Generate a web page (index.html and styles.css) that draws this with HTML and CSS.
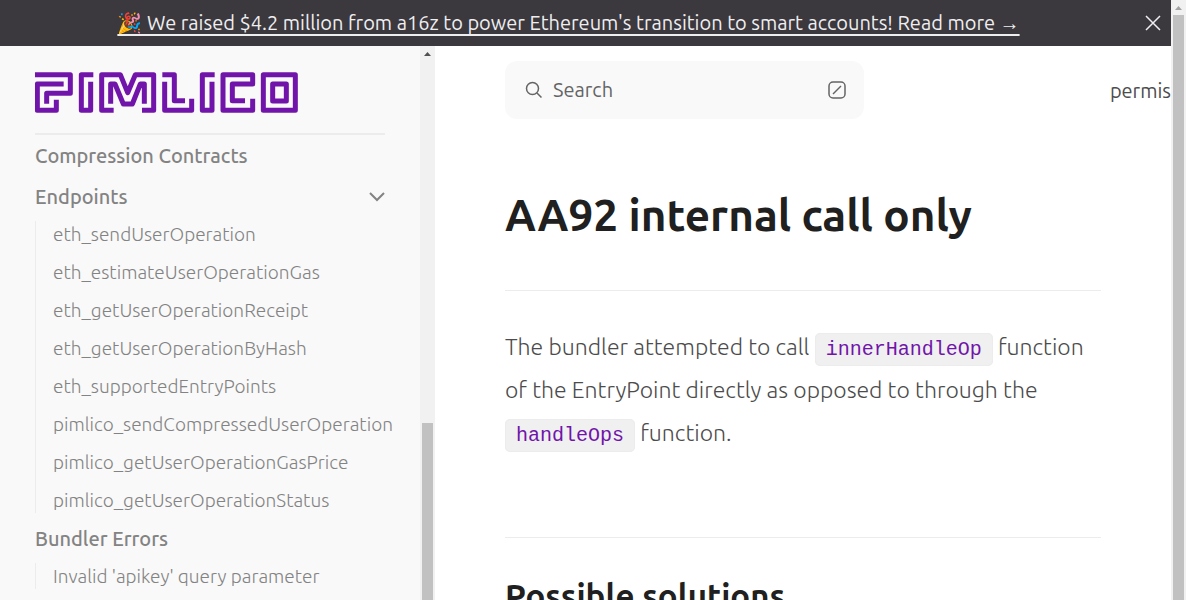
FILE: index.html
```html
<!DOCTYPE html>
<html lang="en">
<head>
<meta charset="utf-8">
<title>AA92 internal call only</title>
<link rel="stylesheet" href="styles.css">
</head>
<body>
<div class="page">
  <div class="banner">
    <a class="banner-link" href="#">🎉 We raised $4.2 million from a16z to power Ethereum's transition to smart accounts! Read more →</a>
    <button class="banner-close" type="button" aria-label="Close">
      <svg width="16" height="16" viewBox="0 0 16 16"><path d="M1 1L15 15M15 1L1 15"/></svg>
    </button>
  </div>
  <div class="columns">
    <aside class="sidebar">
      <div class="sidebar-content">
        <a class="logo" href="#" aria-label="Pimlico">
          <svg width="263" height="41" viewBox="0 0 789 123">
            <path d="M0 8H106V64H35V95M86 36H7V115H64V83"/>
            <path d="M175 8H139V115H167V29"/>
            <path d="M236 115H200V8H256L278 62L301 8H356V115H321M227 95V36H240L265 96H292L316 36H328V95"/>
            <path d="M382 8H418V86H450M389 29V115H470V80"/>
            <path d="M539 8H502V115H531V29"/>
            <path d="M630 86H592V36H653V8H564V115H653V80"/>
            <path d="M685 8H781V115H685ZM713 36H754V87H713Z"/>
          </svg>
        </a>
        <nav class="nav">
          <a class="nav-title" href="#">Compression Contracts</a>
          <div class="nav-group">
            <button class="nav-title nav-toggle" type="button">Endpoints
              <svg width="16" height="10" viewBox="0 0 16 10"><path d="M1 1L8 8L15 1"/></svg>
            </button>
            <ul class="nav-list">
              <li><a href="#">eth_sendUserOperation</a></li>
              <li><a href="#">eth_estimateUserOperationGas</a></li>
              <li><a href="#">eth_getUserOperationReceipt</a></li>
              <li><a href="#">eth_getUserOperationByHash</a></li>
              <li><a href="#">eth_supportedEntryPoints</a></li>
              <li><a href="#">pimlico_sendCompressedUserOperation</a></li>
              <li><a href="#">pimlico_getUserOperationGasPrice</a></li>
              <li><a href="#">pimlico_getUserOperationStatus</a></li>
            </ul>
          </div>
          <div class="nav-group">
            <a class="nav-title" href="#">Bundler Errors</a>
            <ul class="nav-list">
              <li><a href="#">Invalid 'apikey' query parameter</a></li>
            </ul>
          </div>
        </nav>
      </div>
      <div class="scrollbar sidebar-scrollbar">
        <svg width="15" height="15" viewBox="0 0 15 15"><path d="M4 10L7.500 6L11 10Z"/></svg>
        <div class="thumb"></div>
      </div>
    </aside>
    <div class="main">
      <header class="topbar">
        <button class="search" type="button">
          <svg width="18" height="18" viewBox="0 0 18 18"><circle cx="7.500" cy="7.500" r="6"/><path d="M12 12L16.500 16.500"/></svg>
          <span class="search-label">Search</span>
          <svg class="search-key" width="18" height="18" viewBox="0 0 18 18"><rect x="1" y="1" width="16" height="16" rx="4"/><path d="M5 13L13 5"/></svg>
        </button>
        <a class="top-link" href="#">permis</a>
      </header>
      <article class="article">
        <h1>AA92 internal call only</h1>
        <p>The bundler attempted to call <code>innerHandleOp</code> function of the EntryPoint directly as opposed to through the <code>handleOps</code> function.</p>
        <h2>Possible solutions</h2>
      </article>
    </div>
  </div>
</div>
<div class="scrollbar page-scrollbar">
  <svg width="15" height="15" viewBox="0 0 15 15"><path d="M4 10L7.500 6L11 10Z"/></svg>
  <div class="thumb"></div>
</div>
</body>
</html>
```
FILE: styles.css
```css
* {
  box-sizing: border-box;
}

body {
  margin: 0;
  display: flex;
  height: 100vh;
  overflow: hidden;
  background: #fff;
  color: #4c4c4c;
  font-family: Ubuntu, "Noto Sans", "Open Sans", sans-serif;
  font-size: 20px;
}

a {
  color: inherit;
  text-decoration: none;
}

button {
  border: 0;
  padding: 0;
  background: none;
  color: inherit;
  font: inherit;
  text-align: left;
}

svg {
  display: block;
  flex: none;
  fill: none;
  stroke: currentColor;
}

.page {
  flex: 1;
  min-width: 0;
  display: flex;
  flex-direction: column;
}

.banner {
  display: flex;
  align-items: center;
  gap: 8px;
  flex: none;
  padding: 8px 10px 8px 0;
  background: #3b383e;
  color: #eeeef0;
  line-height: 30px;
}

.banner-link {
  margin: 0 auto;
  font-size: 20px;
  white-space: nowrap;
  text-decoration: underline;
  text-decoration-thickness: 2px;
  text-underline-offset: 4px;
}

.banner-close svg {
  stroke-width: 1.5;
}

.columns {
  flex: 1;
  min-height: 0;
  display: flex;
}

.sidebar {
  flex: none;
  display: flex;
  width: 435px;
  background: #f9f9f9;
}

.sidebar-content {
  flex: 1;
  min-width: 0;
  overflow: hidden;
  padding: 26px 35px 0;
  color: #838383;
}

.logo {
  display: block;
  padding-bottom: 20px;
  border-bottom: 2px solid #ececec;
  color: #7115aa;
}

.logo svg {
  stroke-width: 15;
  stroke-linejoin: round;
}

.nav {
  display: flex;
  flex-direction: column;
  padding-top: 6px;
}

.nav-title {
  display: flex;
  align-items: center;
  justify-content: space-between;
  width: 100%;
  line-height: 30px;
  font-size: 20px;
  font-weight: 500;
}

.nav-group {
  padding-top: 11px;
}

.nav-toggle svg {
  stroke-width: 2;
}

.nav-list {
  list-style: none;
  margin: 9px 0 0;
  padding: 0 0 0 17px;
  border-left: 1px solid #ececec;
  font-size: 19px;
  font-weight: 300;
  white-space: nowrap;
}

.nav-list li {
  line-height: 26px;
  padding-bottom: 12px;
}

.nav-list li:last-child {
  padding-bottom: 0;
}

.scrollbar {
  flex: none;
  display: flex;
  flex-direction: column;
  width: 15px;
  background: #f1f1f1;
}

.scrollbar svg {
  fill: #505050;
  stroke: none;
}

.page-scrollbar svg {
  fill: #a3a3a3;
}

.thumb {
  flex: 1;
  margin: 0 2px;
  background: #c1c1c1;
}

.sidebar-scrollbar .thumb {
  flex: none;
  height: 32%;
  margin-top: auto;
}

.main {
  flex: 1;
  min-width: 0;
  overflow: hidden;
}

.topbar {
  display: flex;
  align-items: center;
  justify-content: space-between;
  padding: 15px 0 0 70px;
}

.search {
  flex: none;
  display: flex;
  align-items: center;
  width: 359px;
  padding: 14px 18px 14px 20px;
  border-radius: 12px;
  background: #f9f9f9;
  color: #646464;
  line-height: 30px;
}

.search svg {
  stroke-width: 1.5;
}

.search-label {
  flex: 1;
  padding-left: 10px;
}

.top-link {
  white-space: nowrap;
}

.article {
  padding: 60px 70px 0;
}

h1,
h2 {
  margin: 0;
  color: #202020;
  font-weight: 600;
}

h1 {
  padding-bottom: 39px;
  border-bottom: 1px solid #ececec;
  font-size: 44px;
  line-height: 72px;
}

p {
  margin: 34px 0 83px;
  font-size: 23px;
  font-weight: 300;
  line-height: 43px;
}

code {
  padding: 4px 10px;
  border: 1px solid #ececec;
  border-radius: 5px;
  background: #f0f0f0;
  color: #7115aa;
  font-family: "Liberation Mono", monospace;
  font-size: 20px;
  font-weight: 400;
  line-height: 24px;
}

h2 {
  padding-top: 37px;
  border-top: 1px solid #ececec;
  font-size: 33px;
  line-height: 42px;
  white-space: nowrap;
}
```
